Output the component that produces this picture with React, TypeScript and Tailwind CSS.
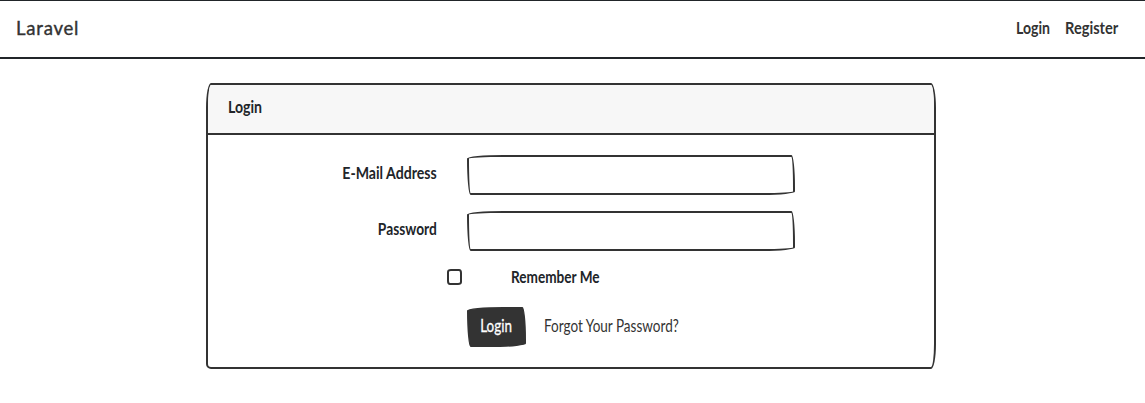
import { useState, type ReactNode } from "react";

const sketch =
  "rounded-[255px_25px_225px_25px/25px_225px_25px_255px] border-2 border-[#333]";

function Hand({ children, className }: { children: ReactNode; className: string }) {
  return (
    <span className={`inline-block whitespace-nowrap leading-6 ${className}`}>
      {children}
    </span>
  );
}

type FieldProps = { label: string; labelClass: string; id: string; type: string };

function Field({ label, labelClass, id, type }: FieldProps) {
  return (
    <div className="mb-4 flex h-10">
      <label htmlFor={id} className="flex w-[229px] justify-end pt-[6px]">
        <Hand className={`origin-right font-bold ${labelClass}`}>{label}</Hand>
      </label>
      <input
        id={id}
        type={type}
        className={`ml-[30px] h-10 w-[328px] bg-white px-3 outline-none ${sketch}`}
      />
    </div>
  );
}

export default function App() {
  const [remember, setRemember] = useState(false);
  return (
    <div className="min-h-[403px] bg-white font-['Lato','Liberation_Sans',sans-serif] text-[17px] text-[#212529]">
      <nav className="flex h-[59px] justify-between border-t border-b-2 border-[#212529] pr-[26px] pl-4 text-[#333]">
        <a href="#" className="w-[62px] pt-[14px]">
          <Hand className="origin-left scale-x-[0.93] text-[20px] tracking-[0.8px] [-webkit-text-stroke:0.4px_#333]">
            Laravel
          </Hand>
        </a>
        <div className="flex gap-[15px] pt-[14px]">
          <a href="#" className="w-[34px]">
            <Hand className="origin-left scale-x-[0.83] font-bold">Login</Hand>
          </a>
          <a href="#" className="w-[54px]">
            <Hand className="origin-left scale-x-[0.86] font-bold">Register</Hand>
          </a>
        </div>
      </nav>

      <main className="pt-6 pl-[206px]">
        <section className="h-[286px] w-[730px] rounded-[5px_5px_5px_5px/25px_25px_25px_5px] border-2 border-[#333]">
          <header className="flex h-[50px] rounded-[3px_3px_0_0/23px_23px_0_0] border-b-2 border-[#333] bg-[#f7f7f7] pt-[10px] pl-5">
            <Hand className="origin-left scale-x-[0.83] font-bold">Login</Hand>
          </header>
          <form className="pt-5" onSubmit={(e) => e.preventDefault()}>
            <Field label="E-Mail Address" labelClass="scale-x-[0.83]" id="email" type="email" />
            <Field label="Password" labelClass="scale-x-[0.81]" id="password" type="password" />
            <label className="flex h-6 items-start pl-[239px]">
              <input
                type="checkbox"
                checked={remember}
                onChange={(e) => setRemember(e.target.checked)}
                className="mt-[2px] h-4 w-[15px] appearance-none rounded-[4px_3px_4px_3px/3px_4px_3px_4px] border-2 border-[#333] checked:bg-[#333]"
              />
              <Hand className="-mt-[2px] ml-[49px] origin-left scale-x-[0.8] font-bold">
                Remember Me
              </Hand>
            </label>
            <div className="mt-4 flex pl-[259px]">
              <button
                type="submit"
                className={`flex h-10 w-[59px] justify-center bg-[#333] pt-[5px] text-white ${sketch}`}
              >
                <Hand className="scale-x-[0.79] [-webkit-text-stroke:0.3px_#fff]">Login</Hand>
              </button>
              <a href="#" className="ml-[18px] flex pt-[7px] text-[#333]">
                <Hand className="origin-left scale-x-[0.795]">Forgot Your Password?</Hand>
              </a>
            </div>
          </form>
        </section>
      </main>
    </div>
  );
}
